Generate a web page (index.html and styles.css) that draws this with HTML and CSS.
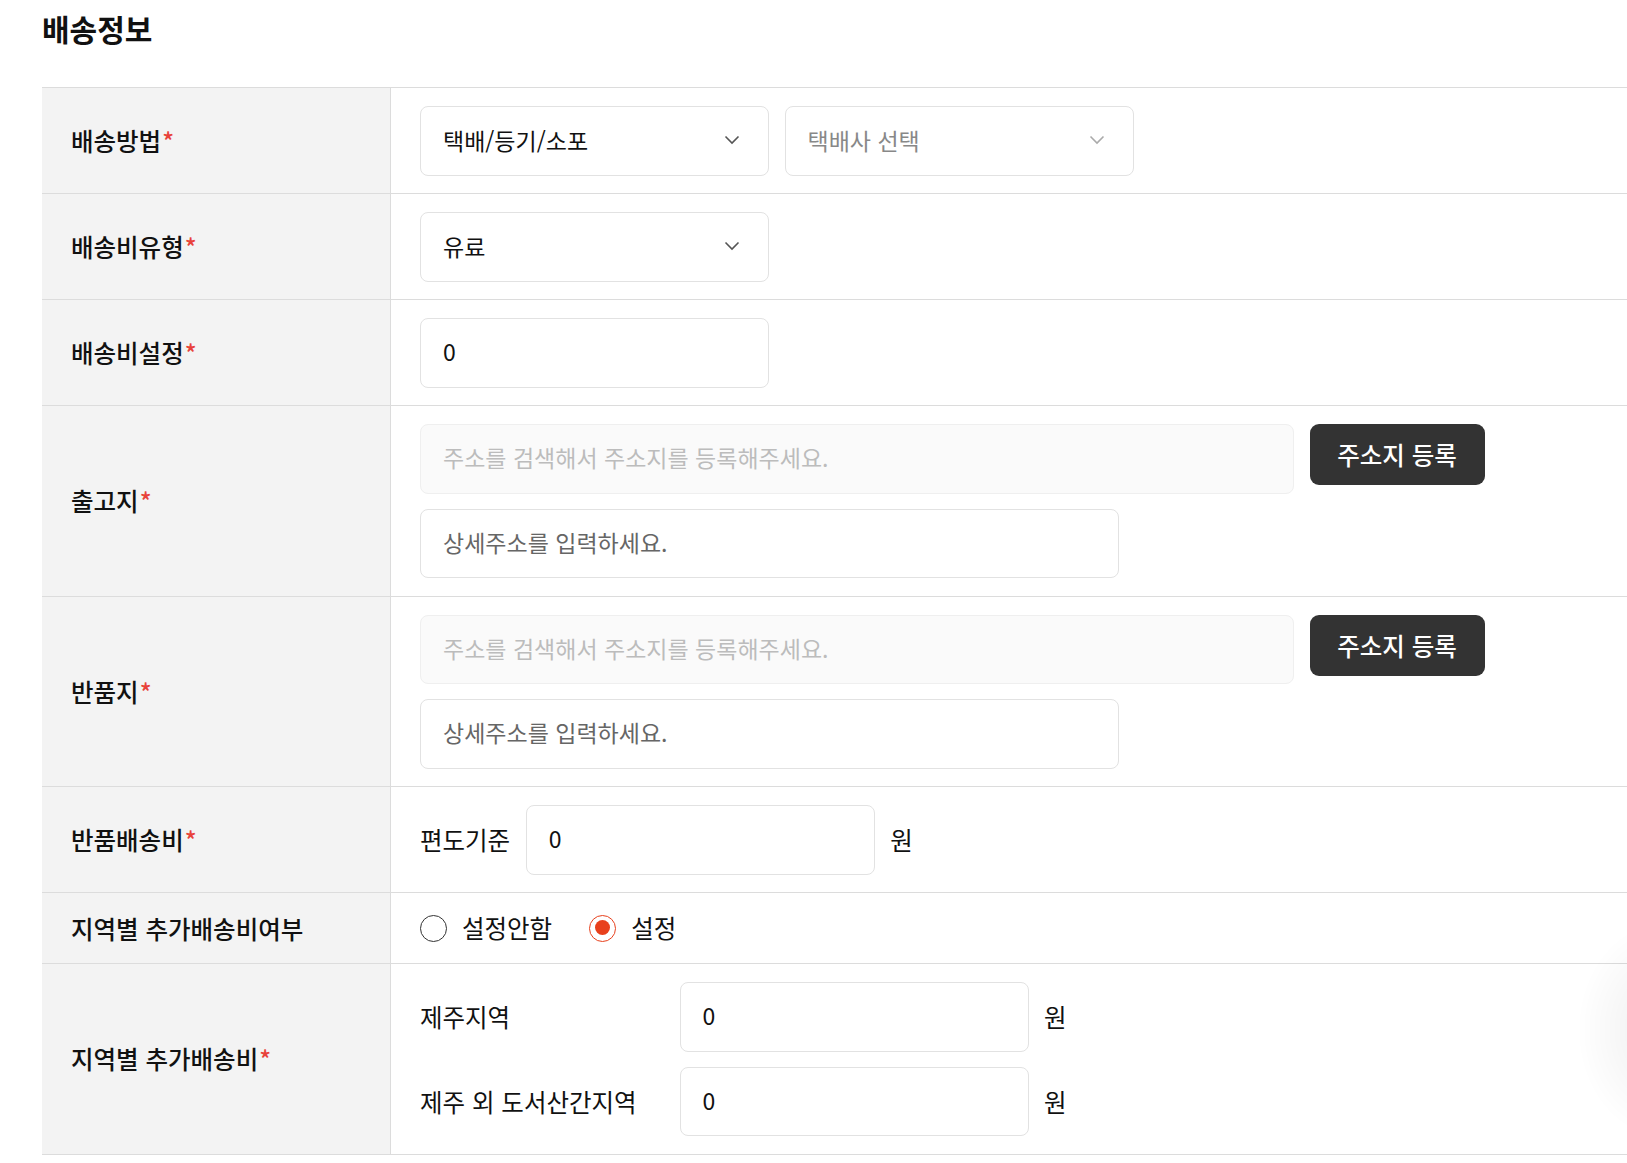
FILE: index.html
```html
<!DOCTYPE html>
<html lang="ko">
<head>
<meta charset="utf-8">
<title>배송정보</title>
<link rel="stylesheet" href="styles.css">
</head>
<body>
<div class="page">
  <h2 class="title">배송정보</h2>
  <div class="table">
    <div class="row">
      <div class="label">배송방법<span class="req">*</span></div>
      <div class="cell">
        <div class="line">
          <div class="select"><span>택배/등기/소포</span><svg class="chev" viewBox="0 0 20 20"><path d="M3.5 6.5 10 13l6.5-6.5"/></svg></div>
          <div class="select muted"><span>택배사 선택</span><svg class="chev" viewBox="0 0 20 20"><path d="M3.5 6.5 10 13l6.5-6.5"/></svg></div>
        </div>
      </div>
    </div>
    <div class="row">
      <div class="label">배송비유형<span class="req">*</span></div>
      <div class="cell">
        <div class="select"><span>유료</span><svg class="chev" viewBox="0 0 20 20"><path d="M3.5 6.5 10 13l6.5-6.5"/></svg></div>
      </div>
    </div>
    <div class="row">
      <div class="label">배송비설정<span class="req">*</span></div>
      <div class="cell">
        <div class="input">0</div>
      </div>
    </div>
    <div class="row">
      <div class="label">출고지<span class="req">*</span></div>
      <div class="cell stack">
        <div class="line">
          <div class="input address">주소를 검색해서 주소지를 등록해주세요.</div>
          <button class="btn">주소지 등록</button>
        </div>
        <div class="input detail">상세주소를 입력하세요.</div>
      </div>
    </div>
    <div class="row">
      <div class="label">반품지<span class="req">*</span></div>
      <div class="cell stack">
        <div class="line">
          <div class="input address">주소를 검색해서 주소지를 등록해주세요.</div>
          <button class="btn">주소지 등록</button>
        </div>
        <div class="input detail">상세주소를 입력하세요.</div>
      </div>
    </div>
    <div class="row">
      <div class="label">반품배송비<span class="req">*</span></div>
      <div class="cell">
        <div class="line center">
          <span class="pre">편도기준</span>
          <div class="input">0</div>
          <span class="unit">원</span>
        </div>
      </div>
    </div>
    <div class="row">
      <div class="label">지역별 추가배송비여부</div>
      <div class="cell radios">
        <label class="radio"><span class="dot"></span>설정안함</label>
        <label class="radio on"><span class="dot"></span>설정</label>
      </div>
    </div>
    <div class="row">
      <div class="label">지역별 추가배송비<span class="req">*</span></div>
      <div class="cell stack">
        <div class="line center">
          <span class="sub">제주지역</span>
          <div class="input">0</div>
          <span class="unit">원</span>
        </div>
        <div class="line center">
          <span class="sub">제주 외 도서산간지역</span>
          <div class="input">0</div>
          <span class="unit">원</span>
        </div>
      </div>
    </div>
  </div>
</div>
<div class="floater"></div>
</body>
</html>
```

FILE: styles.css
```css
* { box-sizing: border-box; }
html, body { margin: 0; padding: 0; background: #fff; overflow: hidden; }
body {
  font-family: "Noto Sans CJK KR", "Noto Sans", sans-serif;
  color: #111;
}
.page { padding-left: 42px; }
.title {
  margin: 0;
  padding-top: 7px;
  height: 87px;
  font-size: 30px;
  font-weight: 700;
  line-height: 42px;
}
.table { border-bottom: 1px solid #dcdcdc; }
.row {
  display: flex;
  border-top: 1px solid #dcdcdc;
}
.label {
  width: 349px;
  flex: none;
  background: #f3f3f3;
  border-right: 1px solid #dcdcdc;
  display: flex;
  align-items: center;
  padding-left: 29px;
  font-size: 24.5px;
  font-weight: 500;
}
.req { color: #e8423a; margin-left: 1px; }
.cell {
  flex: 1;
  padding: 18px 29px 17.5px 29px;
  display: flex;
  align-items: center;
}
.stack { flex-direction: column; align-items: flex-start; gap: 15px; }
.line { display: flex; gap: 15.5px; align-items: flex-start; }
.line.center { align-items: center; }
.select, .input {
  width: 349px;
  height: 69.5px;
  border: 1px solid #e2e2e2;
  border-radius: 8px;
  padding: 0 22px 3px 22px;
  display: flex;
  align-items: center;
  font-size: 23px;
  background: #fff;
}
.select { justify-content: space-between; padding-right: 26px; padding-bottom: 2px; }
.select.muted { color: #888; }
.chev { width: 20px; height: 20px; fill: none; stroke: #555; stroke-width: 1.6; }
.muted .chev { stroke: #aaa; }
.input.address { width: 874px; background: #fafafa; border-color: #efefef; color: #bcbcbc; }
.input.detail { width: 699px; color: #666; }
.btn {
  width: 175px;
  height: 61px;
  border: none;
  border-radius: 9px;
  background: #333;
  color: #fff;
  font-family: inherit;
  font-size: 24.5px;
  font-weight: 500;
  padding: 0;
}
.pre, .unit, .sub { font-size: 24.5px; }
.sub { width: 244px; }
.radios { padding-top: 20px; padding-bottom: 20px; }
.radio {
  display: flex;
  align-items: center;
  font-size: 24.5px;
  line-height: 30px;
  margin-right: 37px;
}
.dot {
  width: 27px;
  height: 27px;
  border: 1.5px solid #333;
  border-radius: 50%;
  margin-right: 15px;
  flex: none;
  position: relative;
}
.radio.on .dot { border-color: #e8401c; }
.radio.on .dot::after {
  content: "";
  position: absolute;
  left: 4.5px; top: 4.5px;
  width: 15px; height: 15px;
  border-radius: 50%;
  background: #e8401c;
}
.floater {
  position: fixed;
  right: 0;
  top: 920px;
  width: 90px;
  height: 220px;
  background: radial-gradient(ellipse 90px 110px at 130px 110px, rgba(0,0,0,0.07), rgba(0,0,0,0) 100%);
  pointer-events: none;
}
```
